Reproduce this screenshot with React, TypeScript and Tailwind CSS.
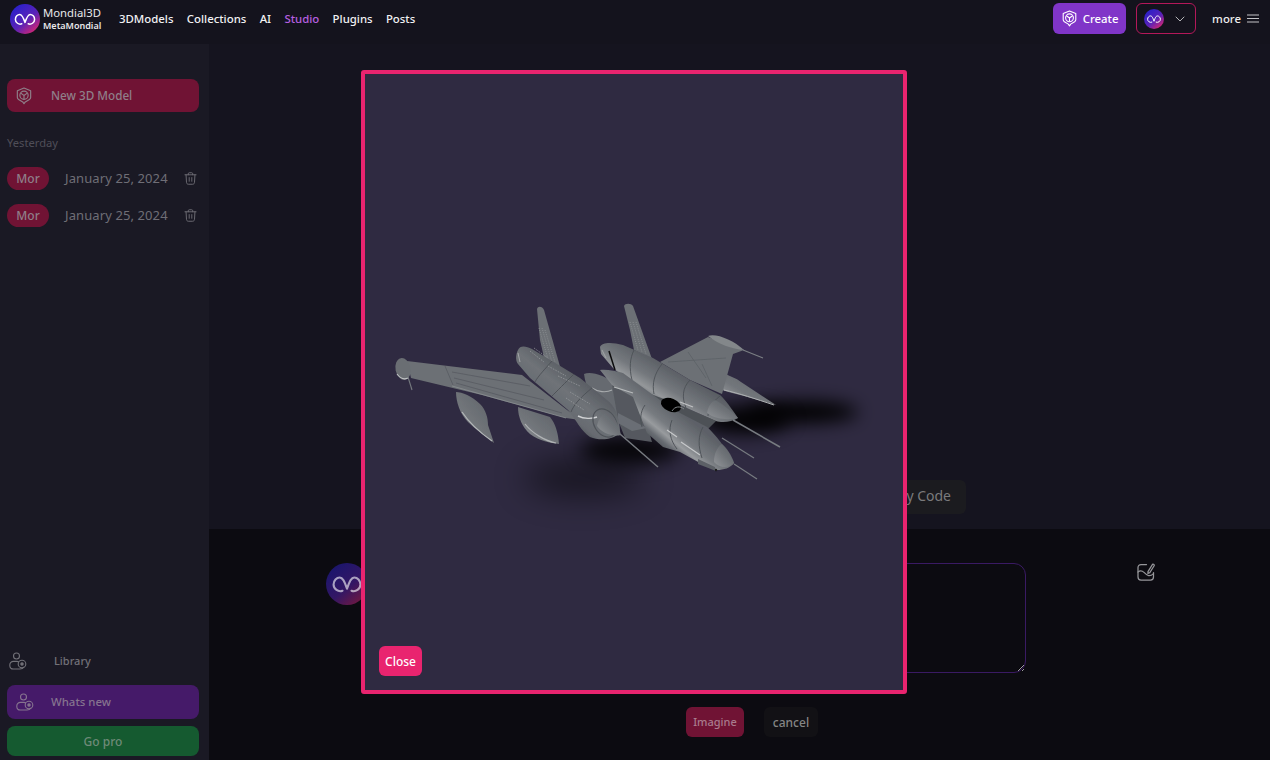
import { ChevronDown } from 'lucide-react';

const NAV = [
  { label: '3DModels', active: false },
  { label: 'Collections', active: false },
  { label: 'AI', active: false },
  { label: 'Studio', active: true },
  { label: 'Plugins', active: false },
  { label: 'Posts', active: false },
];

function LogoMark({ id, className, dim }: { id: string; className: string; dim?: boolean }) {
  return (
    <svg viewBox="0 0 30 30" className={className}>
      <defs>
        <linearGradient id={id} x1="0.15" y1="0.1" x2="0.85" y2="0.95">
          <stop offset="0" stopColor="#2a20c9" />
          <stop offset="0.55" stopColor="#5a22b8" />
          <stop offset="1" stopColor="#d9266f" />
        </linearGradient>
      </defs>
      <circle cx="15" cy="15" r="15" fill={`url(#${id})`} opacity={dim ? 0.5 : 1} />
      <path
        d="M11.8 19.8 C8.8 21 5.4 18.6 5.4 15.4 C5.4 12.5 7.6 10.4 9.8 10.4 C11.8 10.4 13 12.4 15 18.4 C17 12.4 18.2 10.4 20.2 10.4 C22.4 10.4 24.6 12.5 24.6 15.4 C24.6 18.6 21.2 21 18.2 19.8"
        fill="none"
        stroke="white"
        strokeOpacity={dim ? 0.6 : 1}
        strokeWidth="1.5"
        strokeLinecap="round"
        strokeLinejoin="round"
      />
    </svg>
  );
}

function CubeIcon({ className }: { className: string }) {
  return (
    <svg viewBox="0 0 20 20" fill="none" stroke="currentColor" strokeWidth="1.3" strokeLinejoin="round" className={className}>
      <path d="M10 1.2 L17.4 4.2 V11.6 C17.4 12.6 16.8 13.2 16 13.8 L11.4 16.6 L10 18.6 L8.6 16.6 L4 13.8 C3.2 13.2 2.6 12.6 2.6 11.6 V4.2 Z" />
      <circle cx="10" cy="9.2" r="4.6" />
      <path d="M6.4 6.8 L10 9.4 L13.6 6.8 M10 9.4 V13.6" />
    </svg>
  );
}

function TrashIcon() {
  return (
    <svg viewBox="0 0 14 14" fill="none" stroke="currentColor" strokeWidth="1" strokeLinecap="round" strokeLinejoin="round" className="w-[13px] h-[13px]">
      <path d="M1 3 H13 M4.6 3 V1.9 C4.6 1.2 5 0.8 5.7 0.8 H8.3 C9 0.8 9.4 1.2 9.4 1.9 V3" />
      <path d="M2.2 3 L2.7 11.2 C2.8 12.4 3.5 13.2 4.7 13.2 H9.3 C10.5 13.2 11.2 12.4 11.3 11.2 L11.8 3" />
      <path d="M5.6 6 V10 M8.4 6 V10" />
    </svg>
  );
}

function UserToggleIcon({ className }: { className: string }) {
  return (
    <svg viewBox="0 0 18 19" fill="none" stroke="currentColor" strokeWidth="1.1" className={className}>
      <circle cx="7.5" cy="4" r="3" />
      <path d="M9.4 9.6 C8.8 9.5 8.1 9.4 7.4 9.4 H4.4 C2.4 9.4 0.8 11 0.8 13 V13.4 C0.8 15.4 2.4 17 4.4 17 H11 C13 17 14.2 16.2 15 15" strokeLinecap="round" />
      <circle cx="13" cy="12" r="3.8" />
      <circle cx="13" cy="12" r="1.2" fill="currentColor" />
    </svg>
  );
}

function EditIcon() {
  return (
    <svg viewBox="0 0 18 18" fill="none" stroke="#96969a" strokeWidth="1.25" strokeLinecap="round" strokeLinejoin="round" className="w-[18px] h-[18px]">
      <path d="M9.5 1.5 H4 C2.2 1.5 1 2.7 1 4.5 V14 C1 15.8 2.2 17 4 17 H13.5 C15.3 17 16.5 15.8 16.5 14 V9.5" />
      <path d="M1 9 C3 7.5 5 7.6 7 9.4 C8.6 11 10 12.4 11.6 12.6 C13.4 12.8 15 12 16.5 10.6" />
      <path d="M11 8.6 L15.2 1.8 C15.6 1.2 16.2 1 16.8 1.4 C17.4 1.8 17.4 2.4 17 3 L12.8 9.6 L10.9 10.4 Z" />
    </svg>
  );
}

function Airplanes() {
  return (
    <svg viewBox="365 74 538 616" className="w-full h-full">
      <defs>
        <filter id="blurBig" x="-60%" y="-150%" width="220%" height="400%">
          <feGaussianBlur stdDeviation="16" />
        </filter>
        <filter id="blurMid" x="-60%" y="-150%" width="220%" height="400%">
          <feGaussianBlur stdDeviation="9" />
        </filter>
        <filter id="soft" x="-5%" y="-5%" width="110%" height="110%">
          <feGaussianBlur stdDeviation="0.45" />
        </filter>
        <linearGradient id="bodyLeft" gradientUnits="userSpaceOnUse" x1="572" y1="368" x2="542" y2="406">
          <stop offset="0" stopColor="#575b61" />
          <stop offset="0.45" stopColor="#6f7378" />
          <stop offset="0.8" stopColor="#676b71" />
          <stop offset="1" stopColor="#505459" />
        </linearGradient>
        <linearGradient id="bodyUpper" gradientUnits="userSpaceOnUse" x1="672" y1="366" x2="650" y2="402">
          <stop offset="0" stopColor="#585c62" />
          <stop offset="0.5" stopColor="#74787d" />
          <stop offset="0.75" stopColor="#94979a" />
          <stop offset="1" stopColor="#5e6268" />
        </linearGradient>
        <linearGradient id="bodyNear" gradientUnits="userSpaceOnUse" x1="690" y1="420" x2="664" y2="452">
          <stop offset="0" stopColor="#5d6167" />
          <stop offset="0.45" stopColor="#777b80" />
          <stop offset="0.65" stopColor="#989b9e" />
          <stop offset="0.82" stopColor="#686c72" />
          <stop offset="1" stopColor="#505459" />
        </linearGradient>
        <linearGradient id="tankFill" x1="1" y1="0" x2="0" y2="1">
          <stop offset="0" stopColor="#5c6066" />
          <stop offset="0.6" stopColor="#72767b" />
          <stop offset="0.85" stopColor="#93969a" />
          <stop offset="1" stopColor="#6a6e73" />
        </linearGradient>
        <linearGradient id="coneFill" x1="0" y1="1" x2="1" y2="0">
          <stop offset="0" stopColor="#93969a" />
          <stop offset="0.5" stopColor="#6f7378" />
          <stop offset="1" stopColor="#585c62" />
        </linearGradient>
      </defs>

      {/* shadows on the ground */}
      <ellipse cx="802" cy="412" rx="56" ry="11" fill="#000" filter="url(#blurMid)" />
      <ellipse cx="745" cy="420" rx="45" ry="14" fill="#000" opacity="0.95" filter="url(#blurMid)" />
      <ellipse cx="584" cy="478" rx="60" ry="18" fill="#000" opacity="0.5" filter="url(#blurBig)" />
      <ellipse cx="630" cy="450" rx="50" ry="14" fill="#000" opacity="0.85" filter="url(#blurMid)" />

      <g filter="url(#soft)">
        {/* left plane: tanks */}
        <path d="M456 392 C462 392 472 396 480 404 C486 410 488 418 488 425 L494 443 C486 436 476 430 468 422 C460 414 456 402 456 392 Z" fill="url(#tankFill)" />
        <path d="M462 412 C470 424 482 434 492 441" stroke="#b4b7b9" strokeWidth="1.2" fill="none" />
        <path d="M518 407 L550 417 C555 423 558 432 559 444 C550 443 540 441 530 434 C522 427 518 417 518 407 Z" fill="url(#tankFill)" />
        <path d="M525 424 C532 433 545 441 556 443" stroke="#b0b3b5" strokeWidth="1.2" fill="none" />

        {/* left plane: wing */}
        <path d="M407 361 L522 375 L580 420 L566 418 L482 395 L411 378 Z" fill="#6c7075" />
        <path d="M445 366 L453 385 M452 372 L530 386 M454 378 L544 400 M456 383 L562 413" stroke="#54585e" strokeWidth="0.7" fill="none" />
        <path d="M452 386 L566 418" stroke="#8c9093" strokeWidth="0.8" fill="none" />
        <ellipse cx="403" cy="369" rx="7.5" ry="11" fill="#6a6e73" transform="rotate(-12 403 369)" />
        <path d="M397 374 C400 378 404 380 408 378" stroke="#c0c3c5" strokeWidth="1.1" fill="none" />
        <line x1="408" y1="377" x2="412" y2="390" stroke="#75797e" strokeWidth="1.1" />

        {/* left plane: fin */}
        <path d="M537 309 C538 306 542 306 544 310 L561 370 L546 366 L540 340 Z" fill="#6c7075" />
        <path d="M539 328 L549 362 M542 328 L552 362 M545 330 L555 362" stroke="#94989b" strokeWidth="0.7" strokeDasharray="1 1.2" />

        {/* left plane: inner wing pieces and the metal between the bodies */}
        <path d="M584 374 C592 371 604 376 618 384 L634 398 L618 424 L600 410 C592 400 586 388 584 374 Z" fill="#666a70" />
        <path d="M592 388 C598 392 606 393 612 390" stroke="#a8abad" strokeWidth="1.2" fill="none" />
        <path d="M612 385 L640 400 L652 442 L625 438 L618 420 Z" fill="#55595f" />
        <path d="M618 413 L647 428 L632 431 L618 423 Z" fill="#6a6e74" />
        <path d="M613 368 L680 405 L716 421 L707 430 L660 403 L623 376 Z" fill="#4d5157" />

        {/* right plane: outer wing, tank */}
        <path d="M722 373 C730 376 736 378 741 382 L776 405 L744 396 C736 394 728 392 722 390 Z" fill="url(#tankFill)" />
        <path d="M724 390 C738 393 756 399 774 405" stroke="#aeb1b3" strokeWidth="1" fill="none" />
        <path d="M660 362 L708 337 L744 350 L733 354 L722 394 L690 380 Z" fill="#6c7075" />
        <path d="M708 336 C716 333 733 340 744 350 C732 349 718 344 708 336 Z" fill="#83878a" />
        <path d="M668 362 L726 358 M688 352 L706 378 M702 364 L712 386" stroke="#585c62" strokeWidth="0.6" fill="none" />
        <line x1="743" y1="350" x2="763" y2="358" stroke="#7b7f84" strokeWidth="1.1" />

        {/* right plane: fin */}
        <path d="M624 306 C625 303 631 303 633 306 L652 359 L634 350 L630 330 Z" fill="#6c7075" />
        <path d="M630 322 L638 350 M633 322 L642 352 M636 322 L646 354" stroke="#94989b" strokeWidth="0.7" strokeDasharray="1 1.2" />

        {/* right plane: upper fuselage */}
        <path d="M600 347 C602 342 612 342 623 345 L653 358 L690 380 L720 395 C725 399 731 408 738 418 C732 422 722 423 716 421 L680 405 L640 390 L613 368 L601 354 Z" fill="url(#bodyUpper)" />
        <path d="M634 350 C630 358 629 368 632 380 M662 364 C654 374 652 384 654 394 M690 380 C682 388 682 398 686 408 M720 396 C712 402 708 410 708 416" stroke="#4c5056" strokeWidth="0.9" fill="none" />
        <path d="M609 351 L615 370" stroke="#0c0c0e" strokeWidth="1.5" />
        <path d="M602 350 L606 358" stroke="#a8abad" strokeWidth="0.8" />
        <path d="M680 402 L693 407" stroke="#c0c2c4" strokeWidth="1.3" />
        <path d="M715 400 C722 403 732 412 738 418 C730 420 716 420 707 413 C708 407 711 402 715 400 Z" fill="url(#coneFill)" />
        <line x1="733" y1="420" x2="780" y2="447" stroke="#777b80" strokeWidth="1.5" />

        {/* nearest fuselage */}
        <path d="M600 370 C606 369 616 371 623 373 L660 400 L680 413 L707 427 C716 435 726 448 734 463 C730 468 724 470 717 470 L700 463 L680 452 L663 447 L647 433 L633 397 L612 385 Z" fill="url(#bodyNear)" />
        <path d="M645 405 C640 412 640 420 642 427 M672 420 C668 430 670 440 677 449 M703 427 C698 436 698 446 702 458" stroke="#4b4f55" strokeWidth="0.9" fill="none" />
        <path d="M614 387 L633 393" stroke="#b7babc" strokeWidth="1.2" />
        <path d="M667 430 L677 437 M681 442 L700 455" stroke="#c6c8ca" strokeWidth="1.2" />
        <path d="M722 444 C727 448 732 456 734 463 C730 468 720 469 714 462 C714 454 717 447 722 444 Z" fill="url(#coneFill)" />
        <path d="M698 459 L715 467 L716 471 L698 464 Z" fill="#5c6066" />
        <circle cx="716" cy="470" r="1.2" fill="#1a1a1c" />
        <line x1="734" y1="464" x2="757" y2="479" stroke="#777b80" strokeWidth="1.2" />
        <line x1="722" y1="438" x2="754" y2="458" stroke="#777b80" strokeWidth="1.2" />
        <ellipse cx="671" cy="405" rx="10.5" ry="6.5" fill="#000" transform="rotate(22 671 405)" />
        <path d="M672 411 C675 406 680 406 684 409" stroke="#82868a" strokeWidth="1" fill="none" />

        {/* left plane: fuselage */}
        <path d="M518 350 C520 345 526 346 532 349 L547 358 L580 378 L607 400 C615 406 620 418 620 433 C612 440 600 441 590 437 C582 432 576 420 568 410 L530 378 L518 364 C515 360 516 354 518 350 Z" fill="url(#bodyLeft)" />
        <path d="M552 361 C546 368 538 376 535 382 M574 374 C566 382 556 392 552 396 M592 388 C582 396 574 404 571 412" stroke="#4c5056" strokeWidth="0.9" fill="none" />
        <path d="M530 351 L544 362 M534 348 L548 358 M548 366 L566 376 M558 376 L580 386 M570 392 L590 404 M566 398 L584 410" stroke="#9b9ea1" strokeWidth="0.7" strokeDasharray="1.6 1.2" fill="none" />
        <path d="M518 353 L520 362" stroke="#b0b3b5" strokeWidth="0.8" />
        <path d="M578 416 C584 419 592 419 597 417" stroke="#d0d2d4" strokeWidth="1.4" fill="none" />
        <ellipse cx="605" cy="423" rx="11" ry="15" fill="none" stroke="#4f5359" strokeWidth="1.2" transform="rotate(-30 605 423)" />
        <path d="M608 412 C614 414 619 426 621 435 C612 437 602 433 597 426 C598 419 603 413 608 412 Z" fill="url(#coneFill)" />
        <line x1="620" y1="434" x2="658" y2="467" stroke="#777b80" strokeWidth="1.5" />
      </g>
    </svg>
  );
}

export default function App() {
  return (
    <div className="relative flex flex-col w-[1270px] h-[760px] overflow-hidden bg-[#15141f] font-['Noto_Sans','Open_Sans',sans-serif]">
      {/* Header */}
      <header className="flex items-center h-[44px] shrink-0 bg-[#14131d] pb-[7px] pl-[10px] pr-[11px] text-white">
        <LogoMark id="logoMain" className="w-[30px] h-[30px]" />
        <div className="ml-[3px] w-[76px] flex flex-col">
          <span className="text-[11.3px] leading-[15px] text-[#e8e8ea]">Mondial3D</span>
          <span className="text-[9px] leading-[12px] font-semibold text-[#e8e8ea]">MetaMondial</span>
        </div>
        <nav className="flex items-center gap-[13.3px]">
          {NAV.map(item => (
            <span
              key={item.label}
              className={`text-[11.4px] font-medium ${item.active ? 'text-[#b65fe0]' : 'text-[#f1f1f3]'}`}
            >
              {item.label}
            </span>
          ))}
        </nav>
        <div className="ml-auto flex items-center">
          <button className="flex items-center justify-center gap-[5px] w-[73px] h-[31px] rounded-md bg-[#8035c8] text-[11.4px] font-medium">
            <CubeIcon className="w-[17px] h-[17px]" />
            Create
          </button>
          <button className="ml-[10px] flex items-center w-[60px] h-[31px] pl-[7px] rounded-md border border-[#b4185a]">
            <LogoMark id="logoSmall" className="w-[20px] h-[20px]" />
            <ChevronDown className="ml-[8px] w-[16px] h-[16px] text-[#b5b5b8]" strokeWidth={1.5} />
          </button>
          <span className="ml-[16px] text-[11.4px] font-medium text-[#eeeeee]">more</span>
          <svg viewBox="0 0 12 9" className="ml-[6px] w-[12px] h-[9px]" stroke="#c4c4c8" strokeWidth="1">
            <path d="M0 1 H12 M0 4.5 H12 M0 8 H12" />
          </svg>
        </div>
      </header>

      <div className="flex flex-1 min-h-0">
        {/* Sidebar */}
        <aside className="flex flex-col w-[209px] shrink-0 bg-[#1a1924] pl-[7px] pr-[10px] pt-[35px] pb-[4px]">
          <button className="flex items-center h-[33px] rounded-lg bg-[#701334] pl-[8px] text-[11.7px] font-medium text-[#8f7f89]">
            <CubeIcon className="w-[18px] h-[18px] text-[#8f7f89]" />
            <span className="ml-[18px] pt-px">New 3D Model</span>
          </button>
          <p className="mt-[22px] text-[11.2px] leading-[18px] text-[#4f4e58]">Yesterday</p>
          <div className="mt-[15px] flex flex-col gap-[14px]">
            {[0, 1].map(i => (
              <div key={i} className="flex items-center h-[23px]">
                <span className="flex items-center justify-center w-[42px] h-[23px] rounded-full bg-[#701334] text-[12px] font-medium text-[#8f7f89]">
                  Mor
                </span>
                <span className="ml-[16px] text-[13px] tracking-[0.1px] text-[#6f6e76]">January 25, 2024</span>
                <span className="ml-auto mr-[2px] text-[#6f6e76]">
                  <TrashIcon />
                </span>
              </div>
            ))}
          </div>
          <div className="mt-auto flex flex-col">
            <div className="flex items-center h-[24px] pl-[2px] text-[#727178]">
              <UserToggleIcon className="w-[18px] h-[19px]" />
              <span className="ml-[27px] text-[11px] font-medium">Library</span>
            </div>
            <button className="mt-[12px] flex items-center h-[34px] rounded-lg bg-[#451a69] pl-[9px] text-[11.4px] font-medium text-[#86748f]">
              <UserToggleIcon className="w-[18px] h-[19px]" />
              <span className="ml-[17px]">Whats new</span>
            </button>
            <button className="mt-[7px] h-[30px] rounded-lg bg-[#155a30] pt-px text-[12px] font-medium text-[#6f8a78]">Go pro</button>
          </div>
        </aside>

        {/* Main */}
        <main className="flex flex-col flex-1 min-w-0">
          <section className="flex flex-1 items-end justify-end pr-[304px] pb-[15px]">
            <button className="flex items-center h-[34px] px-[15px] pb-[3px] rounded-md bg-[#1b1b1f] text-[14px] text-[#7a7a7c]">Copy Code</button>
          </section>
          <section className="flex flex-col h-[231px] shrink-0 bg-[#0c0b11] pt-[34px]">
            <div className="flex items-start pl-[117px]">
              <LogoMark id="logoPrompt" dim className="w-[42px] h-[42px]" />
              <textarea
                className="ml-[24px] w-[634px] h-[110px] rounded-xl border border-[#3a1a63] bg-transparent outline-none"
                readOnly
              />
              <div className="ml-[111px]">
                <EditIcon />
              </div>
            </div>
            <div className="mt-[34px] ml-[477px] flex gap-[20px]">
              <button className="w-[58px] h-[30px] pt-px rounded-md bg-[#701334] text-[11px] font-medium text-[#a97b8d]">Imagine</button>
              <button className="w-[54px] h-[30px] pt-px rounded-md bg-[#121115] text-[12px] font-medium text-[#858585]">cancel</button>
            </div>
          </section>
        </main>
      </div>

      {/* Model viewer modal */}
      <div className="absolute left-[361px] top-[70px] w-[546px] h-[624px] rounded-[3px] border-4 border-[#e9246f] bg-[#2f2a41]">
        <Airplanes />
        <button className="absolute left-[14px] bottom-[14px] w-[43px] h-[30px] pt-px rounded-md bg-[#e9246f] text-[12px] font-medium text-white">
          Close
        </button>
      </div>
    </div>
  );
}
